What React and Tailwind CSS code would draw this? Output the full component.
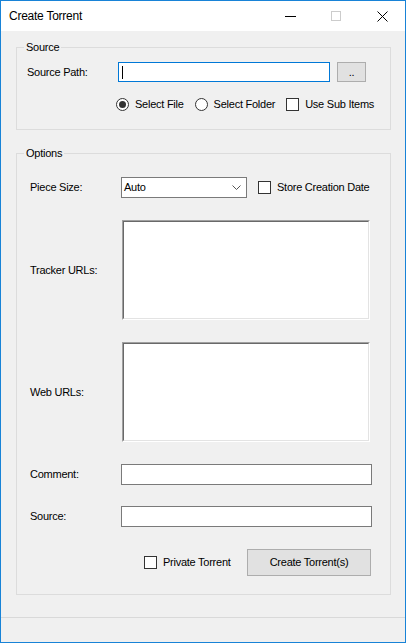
import React from 'react';

const font = { fontFamily: '"Liberation Sans", Arial, sans-serif' };

const Radio = ({ checked }) => (
  <span className="flex h-[13px] w-[13px] shrink-0 items-center justify-center rounded-full border border-[#333333] bg-white">
    {checked && <span className="h-[7px] w-[7px] rounded-full bg-[#333333]" />}
  </span>
);

const Check = () => (
  <span className="block h-[13px] w-[13px] shrink-0 border border-[#333333] bg-white" />
);

const Sunken = ({ className }) => (
  <div className={`border border-t-[#a0a0a0] border-l-[#a0a0a0] border-r-white border-b-white ${className}`}>
    <div className="h-full w-full border border-t-[#696969] border-l-[#696969] border-r-[#e3e3e3] border-b-[#e3e3e3] bg-white" />
  </div>
);

const GroupBox = ({ title, className, children }) => (
  <div className={`relative ml-[15px] w-[375px] border border-[#dcdcdc] ${className}`}>
    <span className="absolute left-[7px] top-[-8px] bg-[#f0f0f0] px-[2px] text-[11px] leading-[14px] text-black">
      {title}
    </span>
    {children}
  </div>
);

const TitleBar = () => (
  <div className="flex h-[30px] items-center bg-white">
    <span className="ml-[8px] text-[12px] text-black">Create Torrent</span>
    <div className="ml-auto flex h-full items-center">
      <div className="flex h-full w-[46px] items-center justify-center">
        <span className="block h-px w-[11px] bg-black" />
      </div>
      <div className="flex h-full w-[46px] items-center justify-center">
        <span className="block h-[10px] w-[10px] border border-[#cccccc]" />
      </div>
      <div className="flex h-full w-[46px] items-center justify-center">
        <svg width="11" height="11" viewBox="0 0 11 11">
          <path d="M0.5 0.5 L10.5 10.5 M10.5 0.5 L0.5 10.5" stroke="#000" strokeWidth="1" fill="none" />
        </svg>
      </div>
    </div>
  </div>
);

export default function App() {
  return (
    <div className="h-[643px] w-[406px] border border-[#1883d7] bg-[#f0f0f0] tracking-[-0.25px]" style={font}>
      <TitleBar />

      <div className="flex h-[587px] flex-col border-b border-[#d9d9d9]">
        {/* Source */}
        <GroupBox title="Source" className="mt-[16px] h-[83px]">
          <div className="mt-[14px] flex h-[20px] items-center">
            <span className="ml-[10px] w-[91px] text-[11px] text-black">Source Path:</span>
            <div className="flex h-[20px] w-[212px] items-center border border-[#0078d7] bg-white">
              <span className="ml-[3px] block h-[13px] w-px bg-black" />
            </div>
            <button className="ml-[7px] flex h-[20px] w-[29px] items-center justify-center border border-[#adadad] bg-[#e1e1e1] text-[11px] leading-none text-black">
              ..
            </button>
          </div>
          <div className="mt-[16px] flex h-[13px] items-center text-[11px] text-black">
            <span className="ml-[99px]"><Radio checked /></span>
            <span className="ml-[6px]">Select File</span>
            <span className="ml-[11px]"><Radio /></span>
            <span className="ml-[6px]">Select Folder</span>
            <span className="ml-[11px]"><Check /></span>
            <span className="ml-[6px]">Use Sub Items</span>
          </div>
        </GroupBox>

        {/* Options */}
        <GroupBox title="Options" className="mt-[23px] h-[442px]">
          <div className="mt-[23px] flex h-[21px] items-center text-[11px] text-black">
            <span className="ml-[13px] w-[91px]">Piece Size:</span>
            <div className="flex h-[21px] w-[126px] items-center justify-between border border-[#7a7a7a] bg-white pl-[2px] pr-[5px]">
              <span>Auto</span>
              <svg width="9" height="5" viewBox="0 0 9 5">
                <path d="M0.5 0.5 L4.5 4.5 L8.5 0.5" stroke="#555" strokeWidth="1" fill="none" />
              </svg>
            </div>
            <span className="ml-[11px]"><Check /></span>
            <span className="ml-[6px]">Store Creation Date</span>
          </div>

          <div className="mt-[22px] flex h-[100px] items-center text-[11px] text-black">
            <span className="ml-[13px] w-[92px]">Tracker URLs:</span>
            <Sunken className="h-[100px] w-[248px]" />
          </div>

          <div className="mt-[22px] flex h-[100px] items-center text-[11px] text-black">
            <span className="ml-[13px] w-[92px]">Web URLs:</span>
            <Sunken className="h-[100px] w-[248px]" />
          </div>

          <div className="mt-[22px] flex h-[21px] items-center text-[11px] text-black">
            <span className="ml-[13px] w-[91px]">Comment:</span>
            <div className="h-[21px] w-[251px] border border-[#7a7a7a] bg-white" />
          </div>

          <div className="mt-[21px] flex h-[21px] items-center text-[11px] text-black">
            <span className="ml-[13px] w-[91px]">Source:</span>
            <div className="h-[21px] w-[251px] border border-[#7a7a7a] bg-white" />
          </div>

          <div className="mt-[22px] flex h-[27px] items-center text-[11px] text-black">
            <span className="ml-[127px]"><Check /></span>
            <span className="ml-[6px]">Private Torrent</span>
            <button className="ml-auto mr-[19px] flex h-[27px] w-[124px] items-center justify-center border border-[#adadad] bg-[#e1e1e1] text-[11px] text-black">
              Create Torrent(s)
            </button>
          </div>
        </GroupBox>
      </div>
    </div>
  );
}
